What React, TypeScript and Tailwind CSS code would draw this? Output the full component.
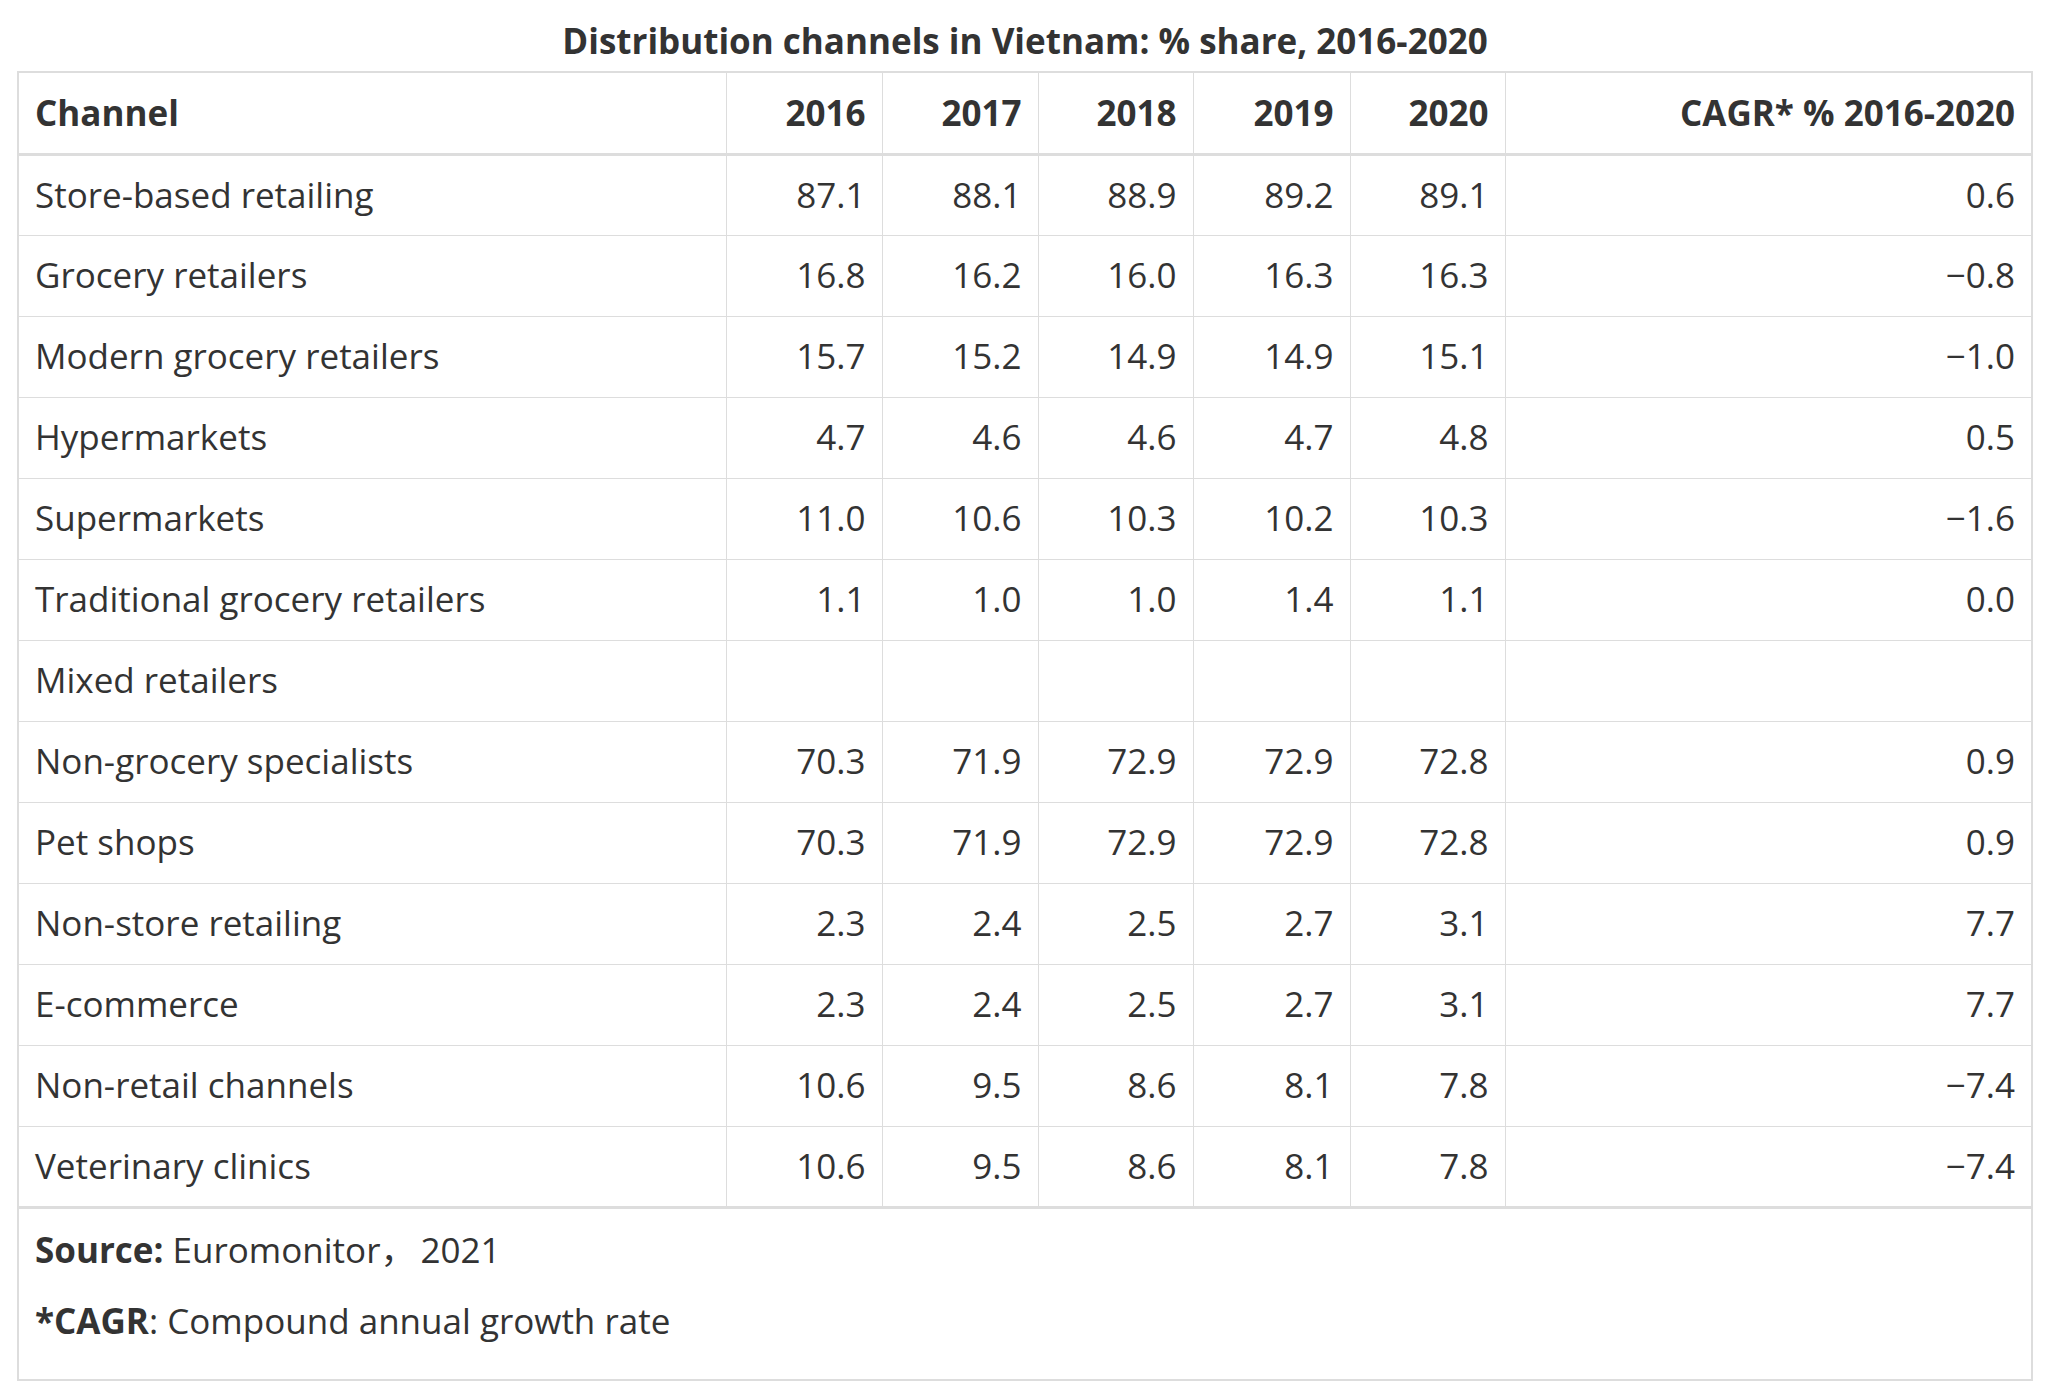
const rows: [string, string[], string][] = [
  ["Store-based retailing", ["87.1", "88.1", "88.9", "89.2", "89.1"], "0.6"],
  ["Grocery retailers", ["16.8", "16.2", "16.0", "16.3", "16.3"], "\u22120.8"],
  ["Modern grocery retailers", ["15.7", "15.2", "14.9", "14.9", "15.1"], "\u22121.0"],
  ["Hypermarkets", ["4.7", "4.6", "4.6", "4.7", "4.8"], "0.5"],
  ["Supermarkets", ["11.0", "10.6", "10.3", "10.2", "10.3"], "\u22121.6"],
  ["Traditional grocery retailers", ["1.1", "1.0", "1.0", "1.4", "1.1"], "0.0"],
  ["Mixed retailers", ["", "", "", "", ""], ""],
  ["Non-grocery specialists", ["70.3", "71.9", "72.9", "72.9", "72.8"], "0.9"],
  ["Pet shops", ["70.3", "71.9", "72.9", "72.9", "72.8"], "0.9"],
  ["Non-store retailing", ["2.3", "2.4", "2.5", "2.7", "3.1"], "7.7"],
  ["E-commerce", ["2.3", "2.4", "2.5", "2.7", "3.1"], "7.7"],
  ["Non-retail channels", ["10.6", "9.5", "8.6", "8.1", "7.8"], "\u22127.4"],
  ["Veterinary clinics", ["10.6", "9.5", "8.6", "8.1", "7.8"], "\u22127.4"],
];

const years = ["2016", "2017", "2018", "2019", "2020"];

export default function App() {
  return (
    <div className="min-h-screen bg-white pt-[21px] font-['Open_Sans','Noto_Sans_CJK_SC',sans-serif] text-[#333333]">
      <table className="ml-[17px] w-[2016px] table-fixed border-collapse border-2 border-[#dddddd]">
        <caption className="pb-[10px] text-center text-[35px] font-bold leading-[40px] [caption-side:top]">
          Distribution channels in Vietnam: % share, 2016-2020
        </caption>
        <colgroup>
          <col className="w-[708px]" />
          <col className="w-[156px]" />
          <col className="w-[156px]" />
          <col className="w-[155px]" />
          <col className="w-[157px]" />
          <col className="w-[155px]" />
          <col />
        </colgroup>
        <thead>
          <tr className="border-b-[3px] border-[#dddddd]">
            <th className="h-[82px] border border-[#dddddd] px-[16px] text-left text-[35px] font-bold">Channel</th>
            {years.map((y) => (
              <th key={y} className="border border-[#dddddd] px-[16px] text-right text-[35px] font-bold">
                {y}
              </th>
            ))}
            <th className="border border-[#dddddd] px-[16px] text-right text-[35px] font-bold">CAGR* % 2016-2020</th>
          </tr>
        </thead>
        <tbody className="text-[35px]">
          {rows.map(([name, vals, cagr]) => (
            <tr key={name} className="h-[81px]">
              <td className="border border-[#dddddd] px-[16px] text-left">{name}</td>
              {vals.map((v, i) => (
                <td key={i} className="border border-[#dddddd] px-[16px] text-right">
                  {v}
                </td>
              ))}
              <td className="border border-[#dddddd] px-[16px] text-right">{cagr}</td>
            </tr>
          ))}
        </tbody>
        <tfoot>
          <tr className="border-t-[3px] border-[#dddddd]">
            <td colSpan={7} className="px-[16px] pt-[17px] pb-[11px] text-[35px] leading-[48px]">
              <p className="mb-[23px]">
                <span className="font-bold">Source:</span> Euromonitor，<span className="pl-[5px]">2021</span>
              </p>
              <p className="mb-[23px]">
                <span className="font-bold">*CAGR</span>: Compound annual growth rate
              </p>
            </td>
          </tr>
        </tfoot>
      </table>
    </div>
  );
}
